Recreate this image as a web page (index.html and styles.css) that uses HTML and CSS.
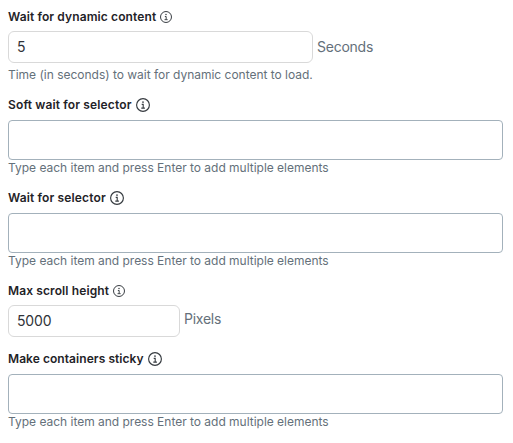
FILE: index.html
```html
<!DOCTYPE html>
<html lang="en">

<head>
    <meta charset="UTF-8">
    <meta name="viewport" content="width=device-width, initial-scale=1.0">
    <title>Scraper settings</title>
    <link rel="stylesheet" href="styles.css">
</head>

<body>
    <svg class="sprite" aria-hidden="true">
        <symbol id="info" viewBox="0 0 14 14">
            <circle cx="7" cy="7" r="6.4" fill="none" stroke="currentColor" stroke-width="1.15" />
            <path d="M5.7 6.4H7.2V10M5.3 10.1H8.9" fill="none" stroke="currentColor" stroke-width="1.1" />
            <circle cx="7" cy="4.1" r="0.85" fill="currentColor" />
        </symbol>
    </svg>

    <form class="settings">
        <div class="field field-wait">
            <label for="wait">Wait for dynamic content <svg class="info small"><use href="#info" /></svg></label>
            <div class="number-row">
                <input type="text" id="wait" class="number wide" value="5">
                <span class="unit">Seconds</span>
            </div>
            <p class="hint">Time (in seconds) to wait for dynamic content to load.</p>
        </div>

        <div class="field">
            <label for="softWait">Soft wait for selector <svg class="info"><use href="#info" /></svg></label>
            <input type="text" id="softWait" class="tags">
            <p class="hint">Type each item and press Enter to add multiple elements</p>
        </div>

        <div class="field">
            <label for="waitSelector">Wait for selector <svg class="info"><use href="#info" /></svg></label>
            <input type="text" id="waitSelector" class="tags">
            <p class="hint">Type each item and press Enter to add multiple elements</p>
        </div>

        <div class="field field-scroll">
            <label for="maxScroll">Max scroll height <svg class="info small"><use href="#info" /></svg></label>
            <div class="number-row">
                <input type="text" id="maxScroll" class="number" value="5000">
                <span class="unit">Pixels</span>
            </div>
        </div>

        <div class="field field-sticky">
            <label for="sticky">Make containers sticky <svg class="info"><use href="#info" /></svg></label>
            <input type="text" id="sticky" class="tags">
            <p class="hint">Type each item and press Enter to add multiple elements</p>
        </div>
    </form>
</body>

</html>
```
FILE: styles.css
```css
* {
    margin: 0;
    padding: 0;
    box-sizing: border-box;
}

body {
    font-family: Inter, "Liberation Sans", sans-serif;
    background: #fff;
    color: #1f2328;
    padding: 7px 10px 0 8px;
}

.sprite {
    display: none;
}

.field {
    height: 93px;
}

.field-wait {
    height: 88px;
}

.field-scroll {
    height: 68px;
}

label {
    display: flex;
    align-items: center;
    gap: 4.5px;
    height: 20px;
    margin-bottom: 5px;
    font-size: 12px;
    font-weight: 600;
    line-height: 20px;
    letter-spacing: 0.14px;
}

.field-wait label,
.field-scroll label {
    gap: 4px;
    margin-bottom: 4px;
    letter-spacing: 0.11px;
}

.field-sticky label {
    letter-spacing: 0.06px;
}

.info {
    width: 14px;
    height: 14px;
    color: #363b40;
}

.info.small {
    width: 12px;
    height: 12px;
}

input {
    display: block;
    font-family: inherit;
    font-size: 14px;
    letter-spacing: -0.15px;
    color: #303338;
    background: #fff;
    outline: none;
}

.number-row {
    display: flex;
    gap: 4px;
    height: 32px;
}

.number {
    width: 172px;
    height: 32px;
    padding: 0 8px 1px;
    border: 1px solid #d9d9d9;
    border-radius: 6px;
}

.number.wide {
    width: 305px;
}

.unit {
    font-size: 14px;
    line-height: 32px;
    letter-spacing: -0.24px;
    color: #64707a;
}

.field-scroll .unit {
    line-height: 28px;
}

.tags {
    width: 495px;
    height: 40px;
    padding: 0 8px;
    border: 1px solid #a3b1bb;
    border-radius: 4px;
}

.hint {
    font-size: 12px;
    line-height: 16px;
    letter-spacing: -0.015px;
    color: #64707a;
}

.field-wait .hint {
    margin-top: 4px;
}
```
